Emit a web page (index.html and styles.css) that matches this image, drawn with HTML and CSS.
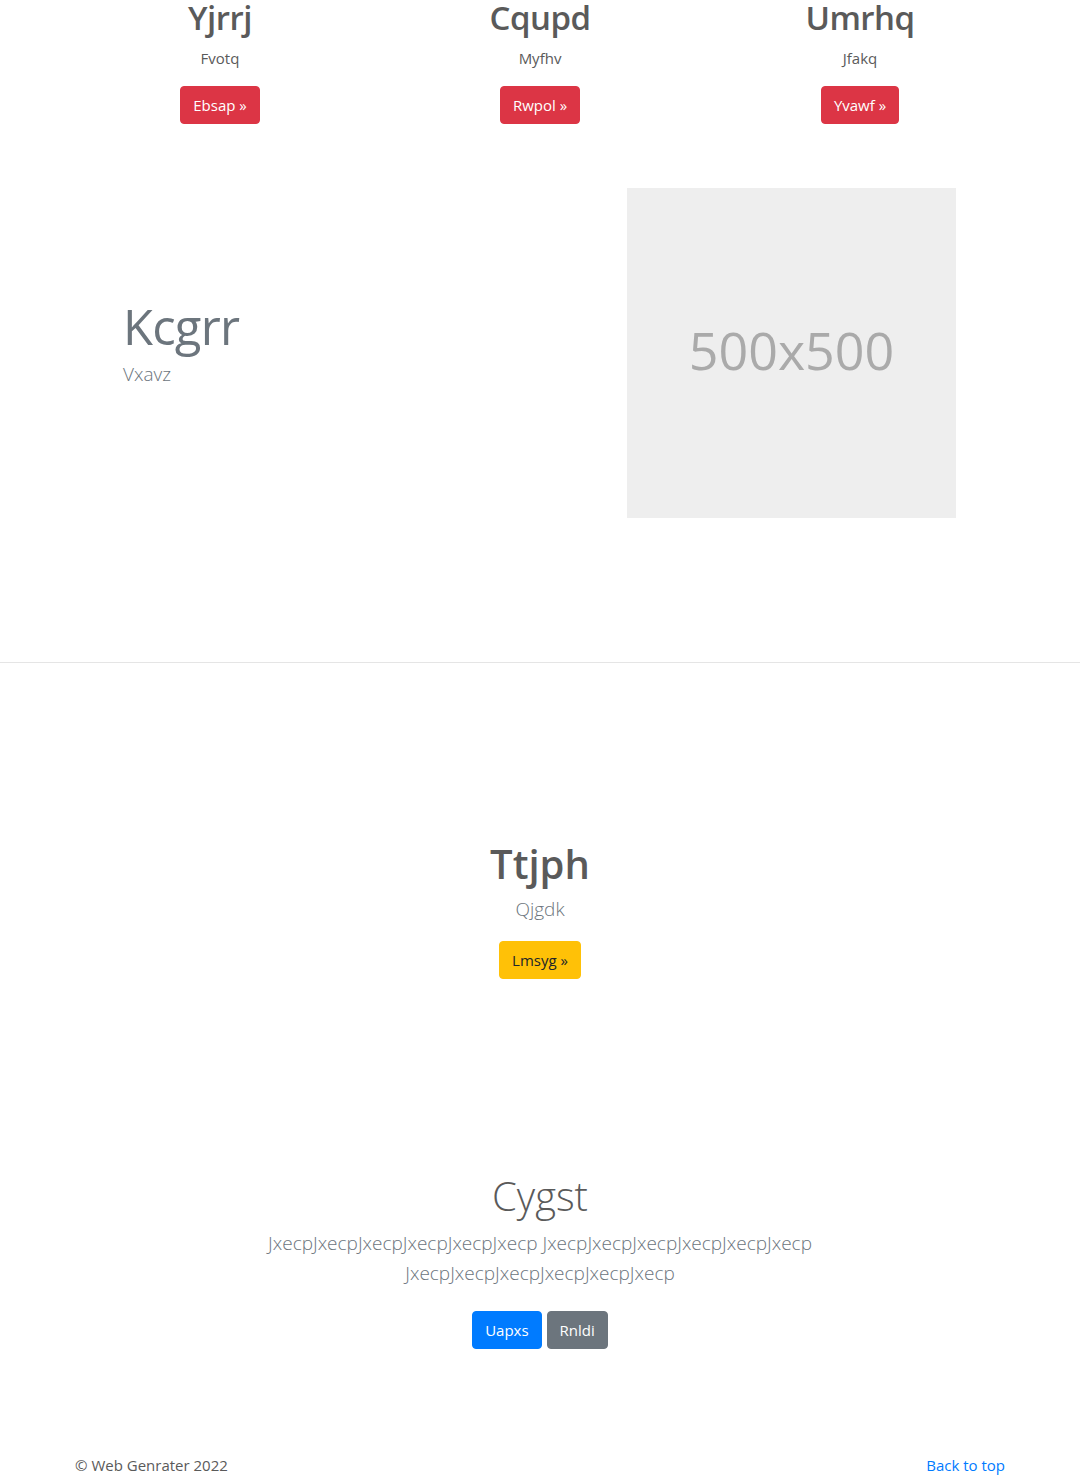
FILE: index.html
```html
<!DOCTYPE html>
<html lang="en">
<head>
<meta charset="utf-8">
<title>Web Genrater</title>
<link rel="stylesheet" href="styles.css">
</head>
<body>
<main>
  <section class="container marketing">
    <div class="col">
      <h2 class="col-title">Yjrrj</h2>
      <p class="col-text">Fvotq</p>
      <a class="btn btn-danger" href="#">Ebsap &raquo;</a>
    </div>
    <div class="col">
      <h2 class="col-title">Cqupd</h2>
      <p class="col-text">Myfhv</p>
      <a class="btn btn-danger" href="#">Rwpol &raquo;</a>
    </div>
    <div class="col">
      <h2 class="col-title">Umrhq</h2>
      <p class="col-text">Jfakq</p>
      <a class="btn btn-danger" href="#">Yvawf &raquo;</a>
    </div>
  </section>

  <section class="featurette">
    <div class="featurette-text">
      <h2 class="featurette-heading">Kcgrr</h2>
      <p class="featurette-lead">Vxavz</p>
    </div>
    <svg class="placeholder" width="329" height="330" viewBox="0 0 329 330" role="img" aria-label="Placeholder: 500x500">
      <rect width="100%" height="100%" fill="#eeeeee"></rect>
      <text x="50%" y="182" text-anchor="middle" class="placeholder-text">500x500</text>
    </svg>
  </section>

  <hr class="divider">

  <section class="center-block">
    <h1 class="center-title">Ttjph</h1>
    <p class="center-lead">Qjgdk</p>
    <a class="btn btn-warning" href="#">Lmsyg &raquo;</a>
  </section>

  <section class="jumbo">
    <h1 class="jumbo-title">Cygst</h1>
    <p class="jumbo-lead">JxecpJxecpJxecpJxecpJxecpJxecp JxecpJxecpJxecpJxecpJxecpJxecp JxecpJxecpJxecpJxecpJxecpJxecp</p>
    <div class="jumbo-actions">
      <a class="btn btn-primary" href="#">Uapxs</a>
      <a class="btn btn-secondary" href="#">Rnldi</a>
    </div>
  </section>
</main>

<footer class="container footer">
  <p class="footer-copy">&copy; Web Genrater 2022</p>
  <p class="footer-top"><a href="#">Back to top</a></p>
</footer>
</body>
</html>
```

FILE: styles.css
```css
* { box-sizing: border-box; }

html, body {
  margin: 0;
  padding: 0;
}

body {
  font-family: "Open Sans", "Noto Sans", "Liberation Sans", sans-serif;
  font-size: 16px;
  line-height: 1.5;
  color: #5a5a5a;
  background: #ffffff;
}

a { color: #007bff; text-decoration: none; }

.container {
  width: 960px;
  margin: 0 auto;
}

/* Top three columns */
.marketing {
  display: grid;
  grid-template-columns: repeat(3, 1fr);
}

.col {
  text-align: center;
  padding: 0 15px;
}

.col-title {
  margin: 0;
  font-size: 33px;
  line-height: 36px;
  font-weight: 600;
  letter-spacing: -0.5px;
  color: #5a5a5a;
}

.col-text {
  margin: 10px 0 16px;
  font-size: 15px;
  line-height: 24px;
}

/* Buttons */
.btn {
  display: inline-block;
  padding: 6px 12px;
  font-size: 15px;
  line-height: 24px;
  border: 1px solid transparent;
  border-radius: 4px;
  color: #ffffff;
  vertical-align: middle;
}

.btn-danger { background: #dc3545; border-color: #dc3545; }
.btn-warning { background: #ffc107; border-color: #ffc107; color: #212529; }
.btn-primary { background: #007bff; border-color: #007bff; }
.btn-secondary { background: #6c757d; border-color: #6c757d; }

/* Featurette */
.featurette {
  display: flex;
  justify-content: space-between;
  align-items: flex-start;
  padding: 64px 124px 0 123px;
  height: 459px;
}

.featurette-text {
  margin-top: 113px;
}

.featurette-heading {
  margin: 0;
  font-size: 49px;
  line-height: 50px;
  font-weight: 400;
  letter-spacing: -0.8px;
  color: #6c757d;
}

.featurette-lead {
  margin: 8px 0 0;
  font-size: 19px;
  line-height: 30px;
  font-weight: 300;
  color: #6c757d;
}

.placeholder {
  display: block;
  flex: 0 0 auto;
}

.placeholder-text {
  fill: #aaaaaa;
  font-family: "Open Sans", "Noto Sans", sans-serif;
  font-size: 52px;
}

.divider {
  margin: 79px 0 0;
  border: 0;
  border-top: 1px solid #e5e5e5;
  height: 0;
}

/* Center block */
.center-block {
  text-align: center;
  padding-top: 177px;
}

.center-title {
  margin: 0;
  font-size: 40px;
  line-height: 48px;
  font-weight: 600;
  color: #5a5a5a;
}

.center-lead {
  margin: 6px 0 17px;
  font-size: 19px;
  line-height: 30px;
  font-weight: 300;
  color: #6c757d;
}

/* Jumbotron */
.jumbo {
  width: 640px;
  margin: 0 auto;
  padding: 193px 15px 0;
  text-align: center;
}

.jumbo-title {
  margin: 0;
  font-size: 40px;
  line-height: 48px;
  font-weight: 300;
  color: #5a5a5a;
}

.jumbo-lead {
  margin: 8px 0 23px;
  font-size: 19px;
  line-height: 30px;
  font-weight: 300;
  color: #6c757d;
}

.jumbo-actions {
  display: flex;
  justify-content: center;
  gap: 5px;
}

/* Footer */
.footer {
  display: flex;
  justify-content: space-between;
  padding: 104px 15px 0;
}

.footer p {
  margin: 0;
  font-size: 15px;
  line-height: 24px;
}

.footer-copy { color: #5a5a5a; }
```
